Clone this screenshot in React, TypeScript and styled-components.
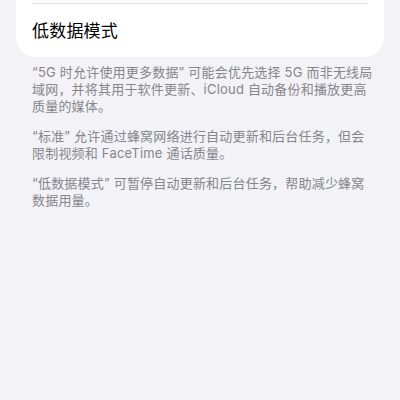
import React from "react";
import styled, { createGlobalStyle } from "styled-components";

const Global = createGlobalStyle`
  html, body { margin: 0; padding: 0; background: #f2f2f7; }
  body {
    font-family: Inter, "Noto Sans CJK SC", "Noto Sans", sans-serif;
    -webkit-font-smoothing: antialiased;
  }
`;

const Page = styled.div`
  width: 400px;
  height: 400px;
  background: #f2f2f7;
  display: flex;
  flex-direction: column;
  overflow: hidden;
`;

const Card = styled.div`
  margin: -20px 16px 0;
  background: #ffffff;
  border-radius: 0 0 20px 20px;
  padding: 0 0 0 16px;
  display: flex;
  flex-direction: column;
`;

const Separator = styled.div`
  height: 1px;
  background: #e3e3e8;
  margin: 23px 16px 0 0;
`;

const RowTitle = styled.div`
  height: 53px;
  padding-bottom: 3px;
  box-sizing: border-box;
  display: flex;
  align-items: center;
  font-size: 17px;
  color: #000;
  letter-spacing: 0.2px;
`;

const Footer = styled.div`
  padding: 7px 32px 0;
  display: flex;
  flex-direction: column;
  gap: 13px;
`;

const Para = styled.p`
  margin: 0;
  font-size: 13px;
  line-height: 17px;
  color: #86868b;
  letter-spacing: 0.2px;
  white-space: nowrap;
`;

export default function App() {
  return (
    <Page>
      <Global />
      <Card>
        <Separator />
        <RowTitle>低数据模式</RowTitle>
      </Card>
      <Footer>
        <Para>
          “5G 时允许使用更多数据” 可能会优先选择 5G 而非无线局
          <br />
          域网，并将其用于软件更新、iCloud 自动备份和播放更高
          <br />
          质量的媒体。
        </Para>
        <Para>
          “标准” 允许通过蜂窝网络进行自动更新和后台任务，但会
          <br />
          限制视频和 FaceTime 通话质量。
        </Para>
        <Para>
          “低数据模式” 可暂停自动更新和后台任务，帮助减少蜂窝
          <br />
          数据用量。
        </Para>
      </Footer>
    </Page>
  );
}
